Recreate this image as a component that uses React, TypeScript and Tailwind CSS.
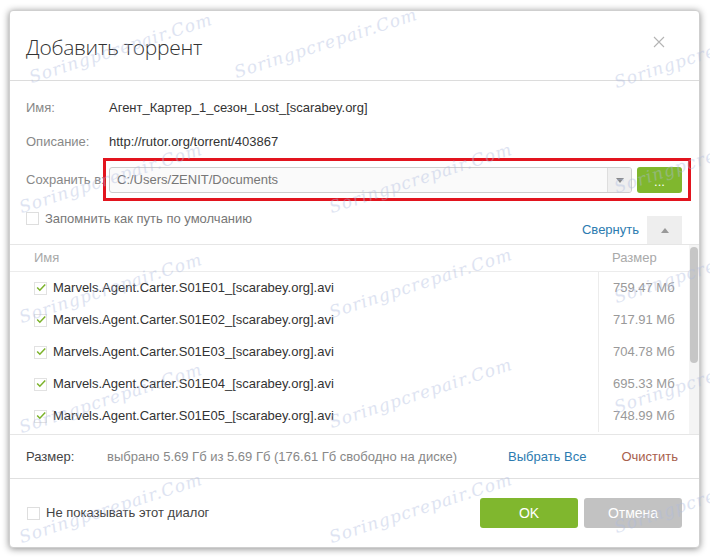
const files = [
  { name: "Marvels.Agent.Carter.S01E01_[scarabey.org].avi", size: "759.47 Мб" },
  { name: "Marvels.Agent.Carter.S01E02_[scarabey.org].avi", size: "717.91 Мб" },
  { name: "Marvels.Agent.Carter.S01E03_[scarabey.org].avi", size: "704.78 Мб" },
  { name: "Marvels.Agent.Carter.S01E04_[scarabey.org].avi", size: "695.33 Мб" },
  { name: "Marvels.Agent.Carter.S01E05_[scarabey.org].avi", size: "748.99 Мб" },
];

const marks = [
  [25, 40], [230, 35], [610, 45],
  [15, 170], [325, 170], [610, 150],
  [15, 280], [325, 275], [610, 260],
  [15, 390], [325, 385], [610, 370],
  [15, 500], [325, 500], [610, 490],
];

function Check() {
  return (
    <span className="flex h-[13px] w-[13px] items-center justify-center border border-[#e2e2e2] bg-white">
      <svg width="13" height="11" viewBox="0 0 13 11" className="-mt-[2px] ml-[1px]">
        <path d="M1.5 5.5 L5 9 L12 1.5" fill="none" stroke="#7cb32b" strokeWidth="2" />
      </svg>
    </span>
  );
}

export default function App() {
  return (
    <div className="relative h-[559px] w-[710px] overflow-hidden bg-white pl-[9px] pt-[10px] font-['Liberation_Sans',Arial,sans-serif] text-[13px] leading-[16px]">
      <div className="relative flex h-[538px] w-[691px] flex-col rounded-[4px] border border-[#cfcfcf] bg-white shadow-[0_1px_7px_rgba(0,0,0,0.45)]">
        <div className="flex h-[70px] shrink-0 items-center justify-between border-b border-[#dcdcdc] pl-[16px] pr-[34px]">
          <h1 className="pt-[2px] font-['Open_Sans',sans-serif] text-[21px] font-light leading-[28px] tracking-[-0.3px] text-[#333]">
            Добавить торрент
          </h1>
          <svg width="12" height="12" viewBox="0 0 12 12" className="-mt-[8px]">
            <path d="M1 1 L11 11 M11 1 L1 11" stroke="#b4b4b4" strokeWidth="1.1" />
          </svg>
        </div>

        <div className="flex flex-col pl-[16px] pr-[17px] pt-[10px]">
          <div className="flex h-[34px] items-center">
            <span className="w-[83px] text-[#888]">Имя:</span>
            <span className="text-[#333]">Агент_Картер_1_сезон_Lost_[scarabey.org]</span>
          </div>
          <div className="flex h-[34px] items-center">
            <span className="w-[83px] text-[#888]">Описание:</span>
            <span className="text-[#333]">http://rutor.org/torrent/403867</span>
          </div>
          <div className="mt-[8px] flex h-[26px] items-center">
            <span className="w-[83px] whitespace-nowrap text-[#888]">Сохранить в:</span>
            <div className="flex h-[26px] w-[523px] items-center overflow-hidden rounded-[3px] border border-[#cdcdcd] bg-[#fafafa]">
              <span className="flex-1 pl-[7px] text-[#777]">C:/Users/ZENIT/Documents</span>
              <span className="flex h-full w-[24px] items-center justify-center border-l border-[#dedede] bg-[#efefef]">
                <svg width="8" height="5" viewBox="0 0 8 5"><path d="M0 0 H8 L4 5 Z" fill="#888" /></svg>
              </span>
            </div>
            <button className="ml-[5px] flex h-[26px] w-[45px] items-end justify-center rounded-[3px] bg-[#80b72e] pb-[5px] text-[13px] leading-none text-white">
              ...
            </button>
          </div>
          <div className="flex h-[51px] justify-between">
            <div className="flex items-start gap-[6px] pt-[18px] text-[#777]">
              <span className="mt-[1px] h-[13px] w-[13px] border border-[#dedede] bg-white" />
              <span>Запомнить как путь по умолчанию</span>
            </div>
            <div className="flex items-center self-end">
              <span className="mr-[8px] text-[#2c7bb0]">Свернуть</span>
              <span className="flex h-[28px] w-[35px] items-center justify-center bg-[#eeeeee]">
                <svg width="8" height="5" viewBox="0 0 8 5"><path d="M0 5 H8 L4 0 Z" fill="#999" /></svg>
              </span>
            </div>
          </div>
        </div>

        <div className="relative flex h-[191px] w-[689px] shrink-0 flex-col border-y border-[#e6e6e6]">
          <div className="flex h-[27px] shrink-0 items-center border-b border-[#ececec] pr-[9px] text-[#a9a9a9]">
            <span className="flex-1 pl-[24px]">Имя</span>
            <span className="w-[92px] pl-[14px]">Размер</span>
          </div>
          <div className="flex flex-1 flex-col overflow-hidden pr-[9px]">
            {files.map((f) => (
              <div key={f.name} className="flex h-[32px] shrink-0 items-center">
                <div className="flex flex-1 items-center gap-[6px] pl-[24px] text-[#333]">
                  <Check />
                  <span>{f.name}</span>
                </div>
                <span className="flex h-full w-[92px] items-center border-l border-[#ececec] pl-[14px] text-[#999]">
                  {f.size}
                </span>
              </div>
            ))}
          </div>
          <div className="absolute right-0 top-0 h-full w-[10px] bg-[#f4f4f4]">
            <div className="mx-auto mt-[2px] h-[116px] w-[8px] rounded-[4px] bg-[#c6c6c6]" />
          </div>
        </div>

        <div className="flex h-[44px] shrink-0 items-center border-b border-[#e0e0e0] pl-[16px] pr-[21px]">
          <span className="w-[81px] text-[#444]">Размер:</span>
          <span className="flex-1 text-[#888]">выбрано 5.69 Гб из 5.69 Гб (176.61 Гб свободно на диске)</span>
          <span className="mr-[35px] text-[#2c7bb0]">Выбрать Все</span>
          <span className="text-[#a8604c]">Очистить</span>
        </div>

        <div className="flex flex-1 items-center pl-[17px] pr-[17px]">
          <span className="h-[13px] w-[13px] border border-[#dedede] bg-white" />
          <span className="ml-[6px] flex-1 text-[#444]">Не показывать этот диалог</span>
          <button className="h-[30px] w-[98px] rounded-[3px] bg-[#80b72e] text-[14px] text-white">OK</button>
          <button className="ml-[6px] h-[30px] w-[98px] rounded-[3px] bg-[#c2c2c2] text-[14px] text-white">Отмена</button>
        </div>
      </div>

      <div className="pointer-events-none absolute left-[103px] top-[158px] h-[43px] w-[588px] border-[3px] border-[#e2141e]" />

      {marks.map(([x, y], i) => (
        <span
          key={i}
          className="pointer-events-none absolute -rotate-[18deg] font-['DejaVu_Serif',serif] text-[17px] italic tracking-[1px] text-[#aebbe0] opacity-40"
          style={{ left: x, top: y }}
        >
          Soringpcrepair.Com
        </span>
      ))}
    </div>
  );
}
